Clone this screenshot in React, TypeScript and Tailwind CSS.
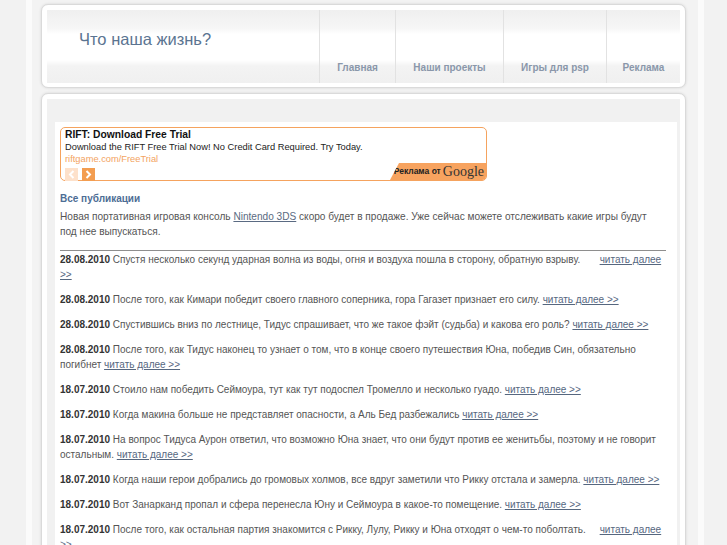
const posts: { date: string; text: string; gap?: number }[] = [
  { date: "28.08.2010", text: "Спустя несколько секунд ударная волна из воды, огня и воздуха пошла в сторону, обратную взрыву.", gap: 6 },
  { date: "28.08.2010", text: "После того, как Кимари победит своего главного соперника, гора Гагазет признает его силу." },
  { date: "28.08.2010", text: "Спустившись вниз по лестнице, Тидус спрашивает, что же такое фэйт (судьба) и какова его роль?" },
  { date: "28.08.2010", text: "После того, как Тидус наконец то узнает о том, что в конце своего путешествия Юна, победив Син, обязательно погибнет" },
  { date: "18.07.2010", text: "Стоило нам победить Сеймоура, тут как тут подоспел Тромелло и несколько гуадо." },
  { date: "18.07.2010", text: "Когда макина больше не представляет опасности, а Аль Бед разбежались" },
  { date: "18.07.2010", text: "На вопрос Тидуса Аурон ответил, что возможно Юна знает, что они будут против ее женитьбы, поэтому и не говорит остальным." },
  { date: "18.07.2010", text: "Когда наши герои добрались до громовых холмов, все вдруг заметили что Рикку отстала и замерла." },
  { date: "18.07.2010", text: "Вот Занарканд пропал и сфера перенесла Юну и Сеймоура в какое-то помещение." },
  { date: "18.07.2010", text: "После того, как остальная партия знакомится с Рикку, Лулу, Рикку и Юна отходят о чем-то поболтать.", gap: 4 },
];

const nav = [
  { label: "Главная", w: "w-[76px]" },
  { label: "Наши проекты", w: "w-[108px]" },
  { label: "Игры для psp", w: "w-[103px]" },
  { label: "Реклама", w: "w-[74px]" },
];

export default function App() {
  return (
    <div className="min-h-screen bg-[#f2f2f2] font-['Liberation_Sans',Arial,sans-serif]">
      <div className="ml-[26px] min-h-screen w-[678px] border-x-[6px] border-[#fbfbfb] bg-[#f3f3f3] pl-[9px] pt-[4px]">
        {/* header */}
        <div className="w-[645px] rounded-[7px] border border-[#dadada] bg-white p-[5px] pb-[4px] shadow-[0_0_3px_rgba(0,0,0,0.12)]">
          <div className="flex h-[73px] bg-[linear-gradient(to_bottom,#efefef_0px,#f6f6f6_18px,#ffffff_24px,#ffffff_50px,#f3f3f3_56px,#f0f0f0_100%)]">
            <div className="w-[272px] pl-[32px] pt-[17px] text-[16.5px] text-[#5b7491]">Что наша жизнь?</div>
            {nav.map((n) => (
              <div
                key={n.label}
                className={`${n.w} flex items-end justify-center border-l border-[#e2e2e2] pb-[8px] text-[10px] font-bold text-[#8a97aa]`}
              >
                {n.label}
              </div>
            ))}
          </div>
        </div>

        {/* main */}
        <div className="mt-[5px] w-[645px] rounded-[7px] border border-[#dadada] bg-white p-[5px] pb-0 shadow-[0_0_3px_rgba(0,0,0,0.12)]">
          <div className="bg-[#f1f1f1] pl-[8px] pr-[3px] pt-[23px]">
            <div className="bg-white pl-[5px] pr-[11px] pt-[5px] text-[10px] leading-[15px] text-[#555]">
              {/* ad */}
              <div className="relative h-[54px] w-[427px] rounded-[5px] border border-[#f5a35e] pl-[4px]">
                <div className="text-[10.3px] font-bold leading-[13px] text-[#111]">RIFT: Download Free Trial</div>
                <div className="text-[9.3px] leading-[13px] text-[#222]">
                  Download the RIFT Free Trial Now! No Credit Card Required. Try Today.
                </div>
                <div className="text-[9.3px] leading-[11px] text-[#f3a361]">riftgame.com/FreeTrial</div>
                <div className="mt-[3px] flex gap-[4px]">
                  <span className="flex h-[13px] w-[13px] items-center justify-center bg-[#fde1cb]">
                    <svg width="7" height="9" viewBox="0 0 7 9">
                      <path d="M5.5 1 L2 4.5 L5.5 8" stroke="#fff" strokeWidth="2" fill="none" />
                    </svg>
                  </span>
                  <span className="flex h-[13px] w-[13px] items-center justify-center bg-[#f39d50]">
                    <svg width="7" height="9" viewBox="0 0 7 9">
                      <path d="M1.5 1 L5 4.5 L1.5 8" stroke="#fff" strokeWidth="2" fill="none" />
                    </svg>
                  </span>
                </div>
                <div className="absolute bottom-0 right-0 flex h-[17px] w-[96px] items-center justify-end gap-[2px] whitespace-nowrap rounded-br-[4px] bg-[#f7a35f] pr-[2px] [clip-path:polygon(9px_0,100%_0,100%_100%,0_100%)]">
                  <span className="text-[8.5px] font-bold leading-none text-[#222]">Реклама от</span>
                  <span className="font-['Liberation_Serif',serif] text-[14px] leading-none text-[#333]">Google</span>
                </div>
              </div>

              <div className="mt-[10px] font-bold leading-[15px] text-[#4d6d95]">Все публикации</div>
              <p className="mt-[3px] max-w-[598px] text-[10.1px]">
                Новая портативная игровая консоль{" "}
                <span className="text-[#5a6a82] underline">Nintendo 3DS</span> скоро будет в продаже. Уже сейчас можете
                отслеживать какие игры будут под нее выпускаться.
              </p>
              <div className="mt-[11px] border-t border-[#8e8e8e]" />
              <div className="pt-[1px]">
                {posts.map((p, i) => (
                  <p key={i} className="mb-[10px]">
                    <b className="text-[#333]">{p.date}</b> {p.text}
                    {p.gap ? "\u00a0".repeat(p.gap) + " " : " "}
                    <span className="text-[#56677f] underline">читать далее &gt;&gt;</span>
                  </p>
                ))}
              </div>
            </div>
          </div>
        </div>
      </div>
    </div>
  );
}
